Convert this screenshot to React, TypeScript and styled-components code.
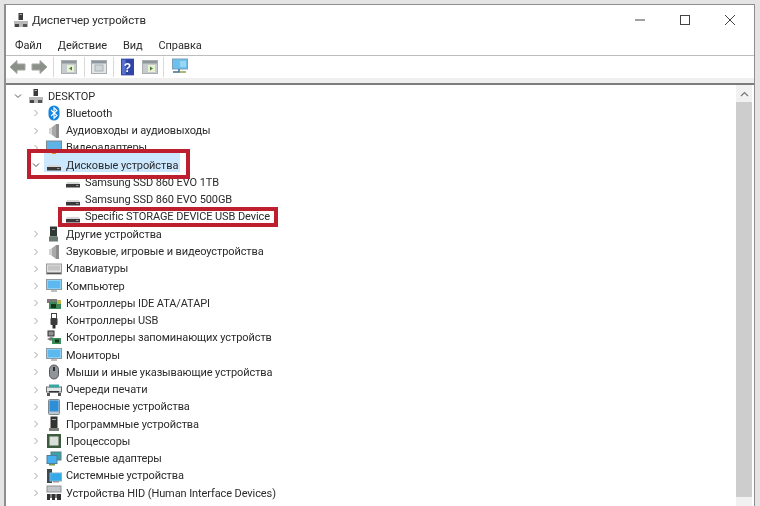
import styled, { createGlobalStyle } from 'styled-components';

const GlobalStyle = createGlobalStyle`
  html, body {
    margin: 0;
    height: 100%;
    overflow: hidden;
    background: #e4e4e4;
  }
`;

const Window = styled.div`
  box-sizing: border-box;
  height: 502px;
  margin: 4px 5px 0 4px;
  border: solid #8e8e8e;
  border-width: 1px 1px 0 2px;
  background: #fff;
  display: flex;
  flex-direction: column;
  font-family: Roboto, 'Noto Sans', sans-serif;
  color: #2b2b2b;
  filter: blur(0.35px);
`;

const TitleBar = styled.header`
  height: 30px;
  flex: none;
  display: flex;
  align-items: center;
  padding: 0 0 1px 7px;
  gap: 3px;
`;

const Title = styled.h1`
  flex: 1;
  margin: 0;
  font-size: 11.5px;
  letter-spacing: -0.1px;
  font-weight: 400;
`;

const WinButton = styled.div`
  width: 45px;
  height: 29px;
  display: flex;
  align-items: center;
  justify-content: center;
  color: #444;
`;

const WinButtons = styled.div`
  display: flex;
  gap: 0;
  margin-right: 2px;
`;

const MenuBar = styled.nav`
  height: 19px;
  flex: none;
  display: flex;
  align-items: center;
  gap: 16px;
  padding-left: 9px;
  font-size: 11px;
  letter-spacing: -0.1px;
  border-bottom: 1px solid #bdbdbd;
`;

const Toolbar = styled.div`
  height: 22px;
  flex: none;
  display: flex;
  align-items: center;
  padding-left: 3px;
`;

const ToolIcon = styled.div<{ $gap?: number }>`
  display: flex;
  margin-left: ${(p) => p.$gap ?? 0}px;
`;

const Separator = styled.div<{ $gap: number }>`
  width: 1px;
  height: 20px;
  background: #d9d9d9;
  margin-left: ${(p) => p.$gap}px;
`;

const ToolbarStrip = styled.div`
  height: 5px;
  flex: none;
  background: #efefef;
  border-bottom: 2px solid #7c7c7c;
`;

const Content = styled.main`
  flex: 1;
  min-height: 0;
  display: flex;
  position: relative;
  overflow: hidden;
`;

const Tree = styled.ul`
  flex: 1;
  margin: 0;
  padding: 2.5px 0 0;
  list-style: none;
  font-size: 11px;
  letter-spacing: -0.1px;
  overflow: hidden;
`;

const Row = styled.li<{ $level: number }>`
  height: 17.27px;
  display: flex;
  align-items: center;
  white-space: nowrap;
  padding-left: ${(p) => [7, 25, 44][p.$level]}px;
`;

const Chevron = styled.span`
  width: 10px;
  flex: none;
  display: flex;
  justify-content: center;
  color: #a6a6a6;
`;

const IconSlot = styled.span`
  width: 16px;
  height: 16px;
  flex: none;
  margin: 0 4px 0 5px;
  display: flex;
`;

const Label = styled.span`
  line-height: 17px;
`;

const SelectedBand = styled.div`
  position: absolute;
  left: 38px;
  top: 68px;
  width: 136px;
  height: 19px;
  background: #cce8ff;
  z-index: 0;
`;

const TreeLayer = styled.div`
  flex: 1;
  display: flex;
  position: relative;
  z-index: 1;
  min-width: 0;
`;

const RedBox = styled.div<{ $x: number; $y: number; $w: number; $h: number }>`
  position: absolute;
  left: ${(p) => p.$x}px;
  top: ${(p) => p.$y}px;
  width: ${(p) => p.$w}px;
  height: ${(p) => p.$h}px;
  box-sizing: border-box;
  border: 4px solid #bd1f2e;
  z-index: 2;
`;

const Scrollbar = styled.aside`
  width: 16px;
  flex: none;
  margin-right: 2px;
  background: #f1f1f1;
  display: flex;
  flex-direction: column;
  z-index: 1;
`;

const ScrollArrow = styled.div`
  height: 17px;
  display: flex;
  align-items: center;
  justify-content: center;
  color: #777;
`;

const ScrollThumb = styled.div`
  height: 395px;
  background: #cdcdcd;
`;

type IconName =
  | 'host' | 'bt' | 'audio' | 'video' | 'disk' | 'other' | 'keyboard' | 'monitor'
  | 'ide' | 'usb' | 'storage' | 'mouse' | 'printer' | 'tablet' | 'firmware'
  | 'cpu' | 'net' | 'system' | 'hid';

function DeviceIcon({ name }: { name: IconName }) {
  const body = () => {
    switch (name) {
      case 'host':
        return (
          <>
            <rect x="5.5" y="1" width="4.5" height="7" fill="#3a3a3a" />
            <rect x="6.5" y="2" width="2.5" height="1" fill="#aaa" />
            <rect x="1" y="9" width="14" height="6" fill="#b9b9b9" />
            <rect x="2" y="12" width="4" height="3" fill="#444" />
            <rect x="10" y="12" width="4" height="3" fill="#555" />
          </>
        );
      case 'bt':
        return (
          <>
            <rect x="2.5" y="0.5" width="11" height="15" rx="5.5" fill="#1384e0" />
            <path d="M5 5l6 5.5-3 2.7V2.8l3 2.7-6 5.5" fill="none" stroke="#fff" strokeWidth="1.1" />
          </>
        );
      case 'audio':
        return (
          <>
            <path d="M10 1v14L5 11H3V5h2z" fill="#a9a9a9" />
            <path d="M10 1h3v14h-3z" fill="#8d8d8d" />
            <path d="M3 5h3v6H3z" fill="#d2d2d2" />
          </>
        );
      case 'video':
        return (
          <>
            <rect x="0.5" y="1" width="15" height="10" fill="#5eb2e6" stroke="#7c8a94" />
            <rect x="6" y="11" width="4" height="3" fill="#e88a2a" />
          </>
        );
      case 'disk':
        return (
          <>
            <path d="M2 8h12l1 2v3H1v-3z" fill="#d8d8d8" />
            <rect x="1" y="10" width="14" height="3.5" fill="#3a3a3a" />
            <rect x="11" y="11" width="2.5" height="1" fill="#9a9a9a" />
          </>
        );
      case 'other':
        return (
          <>
            <rect x="4" y="0.5" width="7" height="10" fill="#2e3a33" />
            <rect x="3" y="10.5" width="9" height="5" fill="#6b7a70" />
            <rect x="6" y="3" width="3" height="1" fill="#999" />
          </>
        );
      case 'keyboard':
        return (
          <>
            <rect x="0.5" y="3" width="15" height="10" fill="#e2e2e2" stroke="#999" />
            <rect x="2" y="4.5" width="12" height="5" fill="#c4c4c4" />
            <rect x="1" y="11.5" width="14" height="1.5" fill="#555" />
          </>
        );
      case 'monitor':
        return (
          <>
            <rect x="0.5" y="1.5" width="15" height="10" fill="#8cd0f4" stroke="#8b9aa5" />
            <rect x="2" y="3" width="12" height="7" fill="#5cb8ee" />
            <rect x="5" y="12" width="6" height="2" fill="#c0c0c0" />
          </>
        );
      case 'ide':
        return (
          <>
            <rect x="1" y="4" width="10" height="4" fill="#7a7a7a" />
            <rect x="3" y="7" width="12" height="7" fill="#3b8a55" />
            <rect x="5" y="9" width="5" height="4" fill="#16351f" />
            <rect x="11" y="5" width="4" height="4" fill="#c4b74a" />
          </>
        );
      case 'usb':
        return (
          <>
            <rect x="5.5" y="0.5" width="5" height="5" fill="none" stroke="#444" />
            <rect x="4.5" y="5" width="7" height="7" rx="1" fill="#3c3c3c" />
            <rect x="6.5" y="12" width="3" height="3.5" fill="#2b2b2b" />
          </>
        );
      case 'storage':
        return (
          <>
            <rect x="2" y="1" width="6" height="5" fill="#8f8f8f" stroke="#333" />
            <path d="M1 9l4-2 3 1-3 3z" fill="#777" />
            <rect x="6" y="8" width="9" height="6" fill="#3a8f58" />
            <rect x="9" y="9.5" width="4" height="3" fill="#16351f" />
          </>
        );
      case 'mouse':
        return (
          <>
            <rect x="3.5" y="1" width="9" height="14" rx="4.5" fill="#8f959b" stroke="#555" />
            <rect x="7" y="3" width="2" height="4" fill="#2f2f2f" />
          </>
        );
      case 'printer':
        return (
          <>
            <rect x="0.5" y="5" width="15" height="5" fill="#dfe6e8" stroke="#6b6b6b" />
            <rect x="3" y="2.5" width="10" height="3" fill="#38a7a0" />
            <rect x="3" y="9" width="10" height="1.5" fill="#333" />
            <rect x="1" y="11" width="3" height="3" fill="#555" />
            <rect x="12" y="11" width="3" height="3" fill="#555" />
          </>
        );
      case 'tablet':
        return (
          <>
            <rect x="2.5" y="0.5" width="11" height="15" rx="1" fill="#bcc5cb" stroke="#7d8a93" />
            <rect x="3.5" y="1.5" width="9" height="11" fill="#2c8fd8" />
          </>
        );
      case 'firmware':
        return (
          <>
            <rect x="4.5" y="0.5" width="7" height="12" fill="#2f3531" />
            <rect x="6" y="3" width="4" height="1" fill="#aaa" />
            <rect x="3" y="12" width="10" height="3" fill="#7a7f7b" />
          </>
        );
      case 'cpu':
        return (
          <>
            <rect x="1" y="1" width="14" height="14" fill="#3c5b3f" />
            <rect x="3.5" y="3.5" width="9" height="9" fill="#dcdfd9" />
          </>
        );
      case 'net':
        return (
          <>
            <rect x="5" y="1" width="10" height="8" fill="#3aa2a8" stroke="#5a7f88" />
            <rect x="1" y="4.5" width="10" height="8" fill="#46b1ee" stroke="#4f7f9e" />
            <rect x="3" y="13" width="6" height="1.5" fill="#7a9b45" />
          </>
        );
      case 'system':
        return (
          <>
            <rect x="1" y="1" width="5" height="14" fill="#3b4a50" />
            <rect x="4" y="5" width="11.5" height="8" fill="#33a9ea" stroke="#7ab5d5" />
            <rect x="7" y="13" width="6" height="1.5" fill="#9a9a9a" />
          </>
        );
      case 'hid':
        return (
          <>
            <rect x="1" y="1" width="14" height="6" fill="#c3c6c9" stroke="#8d9196" />
            <path d="M1 9h3v6H1zM6 9h3v6H6zM11 9h4v6h-4z" fill="#333" />
            <path d="M4 9h2v4H4zM9 9h2v4H9z" fill="#7b7f83" />
          </>
        );
    }
  };
  return (
    <svg width="16" height="16" viewBox="0 0 16 16">
      {body()}
    </svg>
  );
}

const ChevronRight = () => (
  <svg width="6" height="8" viewBox="0 0 6 8">
    <path d="M1.5 1l3 3-3 3" fill="none" stroke="currentColor" />
  </svg>
);

const ChevronDown = () => (
  <svg width="8" height="6" viewBox="0 0 8 6">
    <path d="M1 1.5l3 3 3-3" fill="none" stroke="#555" />
  </svg>
);

const ToolArrow = ({ flip }: { flip?: boolean }) => (
  <svg width="17" height="16" viewBox="0 0 17 16" style={flip ? { transform: 'scaleX(-1)' } : undefined}>
    <path d="M1 8l7-6.5V5h8v6H8v3.5z" fill="#8b9088" stroke="#a3a7a0" />
  </svg>
);

const ToolPane = ({ play, dim }: { play?: boolean; dim?: boolean }) => (
  <svg width="16" height="16" viewBox="0 0 16 16">
    <rect x="0.5" y="1.5" width="15" height="13" fill={dim ? '#e2e6e6' : '#c6ccce'} stroke="#a8adb0" />
    <rect x="1" y="2" width="14" height="2.5" fill="#8d969c" />
    {!dim && <rect x="6" y="6" width="7" height="7" fill="#e9f0d4" />}
    {!dim && <path d={play ? 'M8 7.5v4l3-2z' : 'M11 7.5v4l-3-2z'} fill="#3f7a3f" />}
    {dim && <rect x="4" y="6" width="8" height="6" fill="#cfd6d8" stroke="#aab2b5" />}
  </svg>
);

const ToolHelp = () => (
  <svg width="13" height="18" viewBox="0 0 14 18">
    <rect width="14" height="18" fill="#2f46a8" />
    <rect x="1" y="1" width="4" height="16" fill="#5570cf" />
    <text x="7" y="14" fontSize="13" fontWeight="700" fontFamily="Liberation Sans, sans-serif" textAnchor="middle" fill="#fff">?</text>
  </svg>
);

const ToolScan = () => (
  <svg width="17" height="18" viewBox="0 0 17 18">
    <rect x="1.5" y="1" width="15" height="10" fill="#6cc0ee" stroke="#7c9fb5" />
    <rect x="9" y="3" width="6" height="6" fill="#97d6f5" />
    <path d="M8 11v3H2" fill="none" stroke="#3d6f8f" strokeWidth="1.5" />
    <path d="M8 14h7" stroke="#8ba04a" strokeWidth="1.5" />
  </svg>
);

const rows: { level: number; label: string; icon: IconName; open?: boolean; leaf?: boolean }[] = [
  { level: 0, label: 'DESKTOP', icon: 'host', open: true },
  { level: 1, label: 'Bluetooth', icon: 'bt' },
  { level: 1, label: 'Аудиовходы и аудиовыходы', icon: 'audio' },
  { level: 1, label: 'Видеоадаптеры', icon: 'video' },
  { level: 1, label: 'Дисковые устройства', icon: 'disk', open: true },
  { level: 2, label: 'Samsung SSD 860 EVO 1TB', icon: 'disk', leaf: true },
  { level: 2, label: 'Samsung SSD 860 EVO 500GB', icon: 'disk', leaf: true },
  { level: 2, label: 'Specific STORAGE DEVICE USB Device', icon: 'disk', leaf: true },
  { level: 1, label: 'Другие устройства', icon: 'other' },
  { level: 1, label: 'Звуковые, игровые и видеоустройства', icon: 'audio' },
  { level: 1, label: 'Клавиатуры', icon: 'keyboard' },
  { level: 1, label: 'Компьютер', icon: 'monitor' },
  { level: 1, label: 'Контроллеры IDE ATA/ATAPI', icon: 'ide' },
  { level: 1, label: 'Контроллеры USB', icon: 'usb' },
  { level: 1, label: 'Контроллеры запоминающих устройств', icon: 'storage' },
  { level: 1, label: 'Мониторы', icon: 'monitor' },
  { level: 1, label: 'Мыши и иные указывающие устройства', icon: 'mouse' },
  { level: 1, label: 'Очереди печати', icon: 'printer' },
  { level: 1, label: 'Переносные устройства', icon: 'tablet' },
  { level: 1, label: 'Программные устройства', icon: 'firmware' },
  { level: 1, label: 'Процессоры', icon: 'cpu' },
  { level: 1, label: 'Сетевые адаптеры', icon: 'net' },
  { level: 1, label: 'Системные устройства', icon: 'system' },
  { level: 1, label: 'Устройства HID (Human Interface Devices)', icon: 'hid' },
];

export default function App() {
  return (
    <>
      <GlobalStyle />
      <Window>
        <TitleBar>
          <DeviceIcon name="host" />
          <Title>Диспетчер устройств</Title>
          <WinButtons>
            <WinButton>
              <svg width="10" height="10" viewBox="0 0 10 10">
                <path d="M0 5h10" stroke="currentColor" />
              </svg>
            </WinButton>
            <WinButton>
              <svg width="10" height="10" viewBox="0 0 10 10">
                <rect x="0.5" y="0.5" width="9" height="9" fill="none" stroke="currentColor" />
              </svg>
            </WinButton>
            <WinButton>
              <svg width="10" height="10" viewBox="0 0 10 10">
                <path d="M0 0l10 10M10 0L0 10" stroke="currentColor" />
              </svg>
            </WinButton>
          </WinButtons>
        </TitleBar>
        <MenuBar>
          <span>Файл</span>
          <span>Действие</span>
          <span>Вид</span>
          <span>Справка</span>
        </MenuBar>
        <Toolbar>
          <ToolIcon><ToolArrow /></ToolIcon>
          <ToolIcon $gap={5}><ToolArrow flip /></ToolIcon>
          <Separator $gap={5} />
          <ToolIcon $gap={7}><ToolPane /></ToolIcon>
          <Separator $gap={7} />
          <ToolIcon $gap={6}><ToolPane dim /></ToolIcon>
          <Separator $gap={6} />
          <ToolIcon $gap={7}><ToolHelp /></ToolIcon>
          <ToolIcon $gap={8}><ToolPane play /></ToolIcon>
          <Separator $gap={5} />
          <ToolIcon $gap={7}><ToolScan /></ToolIcon>
        </Toolbar>
        <ToolbarStrip />
        <Content>
          <SelectedBand />
          <TreeLayer>
            <Tree>
              {rows.map((row) => (
                <Row key={row.label} $level={row.level}>
                  <Chevron>
                    {row.leaf ? null : row.open ? <ChevronDown /> : <ChevronRight />}
                  </Chevron>
                  <IconSlot>
                    <DeviceIcon name={row.icon} />
                  </IconSlot>
                  <Label>{row.label}</Label>
                </Row>
              ))}
            </Tree>
          </TreeLayer>
          <RedBox $x={21} $y={64} $w={163} $h={30} />
          <RedBox $x={52} $y={122} $w={220} $h={20} />
          <Scrollbar>
            <ScrollArrow>
              <svg width="9" height="6" viewBox="0 0 9 6">
                <path d="M1 5l3.5-3.5L8 5" fill="none" stroke="currentColor" strokeWidth="1.2" />
              </svg>
            </ScrollArrow>
            <ScrollThumb />
          </Scrollbar>
        </Content>
      </Window>
    </>
  );
}
